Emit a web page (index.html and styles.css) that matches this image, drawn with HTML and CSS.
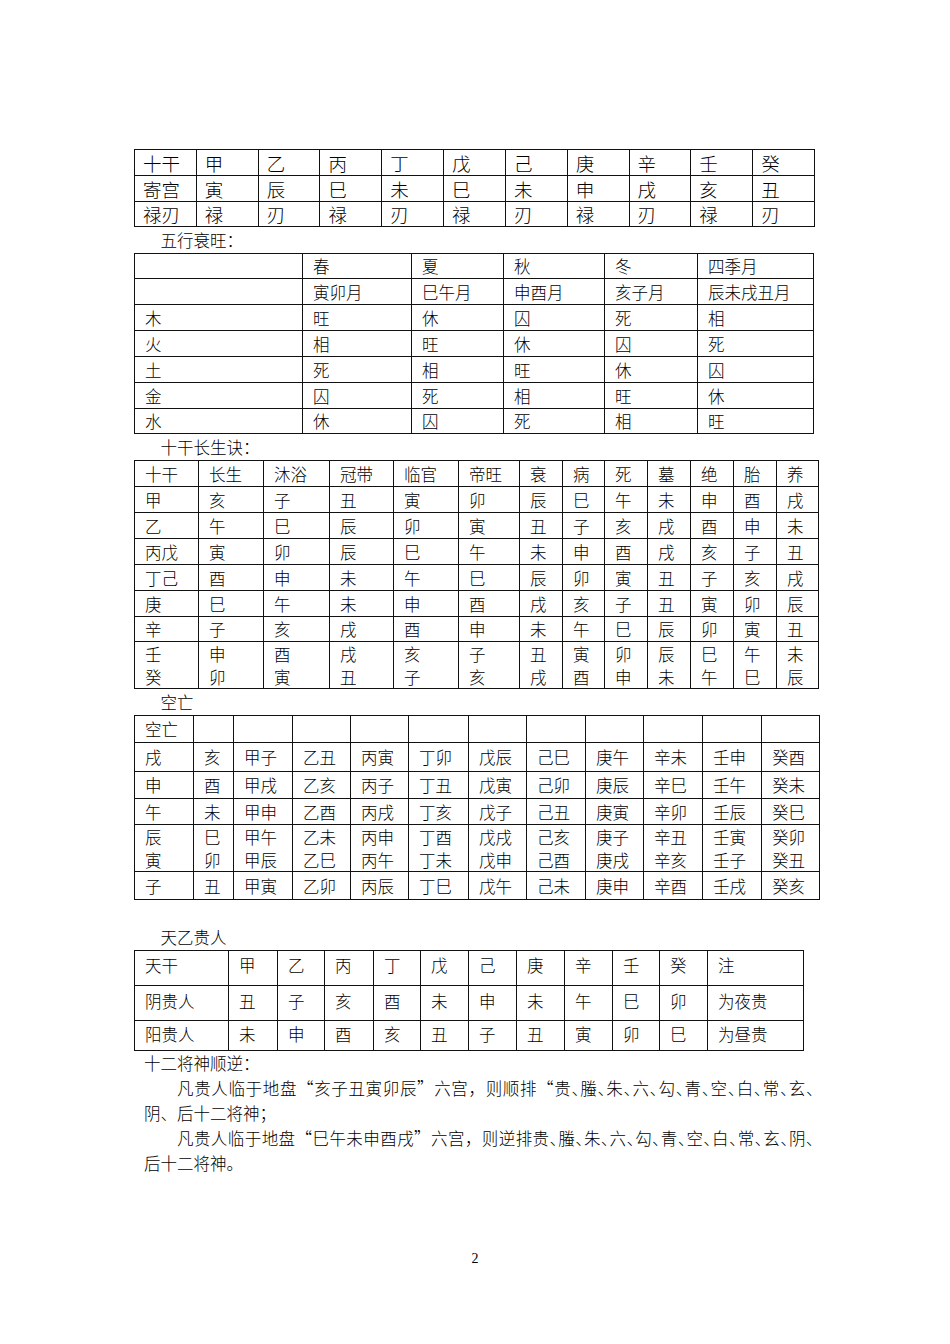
FILE: index.html
```html
<!DOCTYPE html>
<html lang="zh-CN">
<head>
<meta charset="utf-8">
<title>十干 寄宫 禄刃</title>
<link rel="stylesheet" href="styles.css">
</head>
<body>
<div class="page">
  <table class="t1">
    <tr><td>十干</td><td>甲</td><td>乙</td><td>丙</td><td>丁</td><td>戊</td><td>己</td><td>庚</td><td>辛</td><td>壬</td><td>癸</td></tr>
    <tr><td>寄宫</td><td>寅</td><td>辰</td><td>巳</td><td>未</td><td>巳</td><td>未</td><td>申</td><td>戌</td><td>亥</td><td>丑</td></tr>
    <tr class="r25"><td>禄刃</td><td>禄</td><td>刃</td><td>禄</td><td>刃</td><td>禄</td><td>刃</td><td>禄</td><td>刃</td><td>禄</td><td>刃</td></tr>
  </table>

  <div class="cap">五行衰旺：</div>
  <table class="t2">
    <colgroup><col class="w168"><col class="w109"><col class="w92"><col class="w101"><col class="w93"><col class="w116"></colgroup>
    <tr class="r25"><td></td><td>春</td><td>夏</td><td>秋</td><td>冬</td><td>四季月</td></tr>
    <tr><td></td><td>寅卯月</td><td>巳午月</td><td>申酉月</td><td>亥子月</td><td>辰未戌丑月</td></tr>
    <tr><td>木</td><td>旺</td><td>休</td><td>囚</td><td>死</td><td>相</td></tr>
    <tr><td>火</td><td>相</td><td>旺</td><td>休</td><td>囚</td><td>死</td></tr>
    <tr><td>土</td><td>死</td><td>相</td><td>旺</td><td>休</td><td>囚</td></tr>
    <tr><td>金</td><td>囚</td><td>死</td><td>相</td><td>旺</td><td>休</td></tr>
    <tr class="r25"><td>水</td><td>休</td><td>囚</td><td>死</td><td>相</td><td>旺</td></tr>
  </table>

  <div class="cap">十干长生诀：</div>
  <table class="t3">
    <colgroup><col class="w64"><col class="w65"><col class="w66"><col class="w64"><col class="w65"><col class="w61"><col class="w43"><col class="w42"><col class="w43"><col class="w43"><col class="w43"><col class="w43"><col class="w42"></colgroup>
    <tr><td>十干</td><td>长生</td><td>沐浴</td><td>冠带</td><td>临官</td><td>帝旺</td><td>衰</td><td>病</td><td>死</td><td>墓</td><td>绝</td><td>胎</td><td>养</td></tr>
    <tr><td>甲</td><td>亥</td><td>子</td><td>丑</td><td>寅</td><td>卯</td><td>辰</td><td>巳</td><td>午</td><td>未</td><td>申</td><td>酉</td><td>戌</td></tr>
    <tr><td>乙</td><td>午</td><td>巳</td><td>辰</td><td>卯</td><td>寅</td><td>丑</td><td>子</td><td>亥</td><td>戌</td><td>酉</td><td>申</td><td>未</td></tr>
    <tr><td>丙戊</td><td>寅</td><td>卯</td><td>辰</td><td>巳</td><td>午</td><td>未</td><td>申</td><td>酉</td><td>戌</td><td>亥</td><td>子</td><td>丑</td></tr>
    <tr><td>丁己</td><td>酉</td><td>申</td><td>未</td><td>午</td><td>巳</td><td>辰</td><td>卯</td><td>寅</td><td>丑</td><td>子</td><td>亥</td><td>戌</td></tr>
    <tr><td>庚</td><td>巳</td><td>午</td><td>未</td><td>申</td><td>酉</td><td>戌</td><td>亥</td><td>子</td><td>丑</td><td>寅</td><td>卯</td><td>辰</td></tr>
    <tr class="r25"><td>辛</td><td>子</td><td>亥</td><td>戌</td><td>酉</td><td>申</td><td>未</td><td>午</td><td>巳</td><td>辰</td><td>卯</td><td>寅</td><td>丑</td></tr>
    <tr class="open-b r24"><td>壬</td><td>申</td><td>酉</td><td>戌</td><td>亥</td><td>子</td><td>丑</td><td>寅</td><td>卯</td><td>辰</td><td>巳</td><td>午</td><td>未</td></tr>
    <tr class="open-t r24"><td>癸</td><td>卯</td><td>寅</td><td>丑</td><td>子</td><td>亥</td><td>戌</td><td>酉</td><td>申</td><td>未</td><td>午</td><td>巳</td><td>辰</td></tr>
  </table>

  <div class="cap">空亡</div>
  <table class="t4">
    <colgroup><col class="w59"><col class="w40"><col class="w59"><col class="w58"><col class="w58"><col class="w60"><col class="w58"><col class="w59"><col class="w58"><col class="w59"><col class="w59"><col class="w58"></colgroup>
    <tr class="r27"><td>空亡</td><td></td><td></td><td></td><td></td><td></td><td></td><td></td><td></td><td></td><td></td><td></td></tr>
    <tr class="r29"><td>戌</td><td>亥</td><td>甲子</td><td>乙丑</td><td>丙寅</td><td>丁卯</td><td>戊辰</td><td>己巳</td><td>庚午</td><td>辛未</td><td>壬申</td><td>癸酉</td></tr>
    <tr class="r27"><td>申</td><td>酉</td><td>甲戌</td><td>乙亥</td><td>丙子</td><td>丁丑</td><td>戊寅</td><td>己卯</td><td>庚辰</td><td>辛巳</td><td>壬午</td><td>癸未</td></tr>
    <tr><td>午</td><td>未</td><td>甲申</td><td>乙酉</td><td>丙戌</td><td>丁亥</td><td>戊子</td><td>己丑</td><td>庚寅</td><td>辛卯</td><td>壬辰</td><td>癸巳</td></tr>
    <tr class="open-b r24"><td>辰</td><td>巳</td><td>甲午</td><td>乙未</td><td>丙申</td><td>丁酉</td><td>戊戌</td><td>己亥</td><td>庚子</td><td>辛丑</td><td>壬寅</td><td>癸卯</td></tr>
    <tr class="open-t r24"><td>寅</td><td>卯</td><td>甲辰</td><td>乙巳</td><td>丙午</td><td>丁未</td><td>戊申</td><td>己酉</td><td>庚戌</td><td>辛亥</td><td>壬子</td><td>癸丑</td></tr>
    <tr class="r28"><td>子</td><td>丑</td><td>甲寅</td><td>乙卯</td><td>丙辰</td><td>丁巳</td><td>戊午</td><td>己未</td><td>庚申</td><td>辛酉</td><td>壬戌</td><td>癸亥</td></tr>
  </table>

  <div class="blank"></div>
  <div class="cap">天乙贵人</div>
  <table class="t5">
    <colgroup><col class="w94"><col class="w49"><col class="w47"><col class="w49"><col class="w47"><col class="w48"><col class="w48"><col class="w48"><col class="w48"><col class="w47"><col class="w48"><col class="w96"></colgroup>
    <tr class="r35"><td>天干</td><td>甲</td><td>乙</td><td>丙</td><td>丁</td><td>戊</td><td>己</td><td>庚</td><td>辛</td><td>壬</td><td>癸</td><td>注</td></tr>
    <tr class="r35 mid"><td>阴贵人</td><td>丑</td><td>子</td><td>亥</td><td>酉</td><td>未</td><td>申</td><td>未</td><td>午</td><td>巳</td><td>卯</td><td>为夜贵</td></tr>
    <tr class="r30"><td>阳贵人</td><td>未</td><td>申</td><td>酉</td><td>亥</td><td>丑</td><td>子</td><td>丑</td><td>寅</td><td>卯</td><td>巳</td><td>为昼贵</td></tr>
  </table>

  <div class="text">
    <p class="head">十二将神顺逆：</p>
    <p><span class="ln">凡贵人临于地盘“亥子丑寅卯辰”六宫，则顺排“贵<span class="h">、</span>螣<span class="h">、</span>朱<span class="h">、</span>六<span class="h">、</span>勾<span class="h">、</span>青<span class="h">、</span>空<span class="h">、</span>白<span class="h">、</span>常<span class="h">、</span>玄<span class="h">、</span></span>阴、后十二将神；</p>
    <p><span class="ln">凡贵人临于地盘“巳午未申酉戌”六宫，则逆排贵<span class="h">、</span>螣<span class="h">、</span>朱<span class="h">、</span>六<span class="h">、</span>勾<span class="h">、</span>青<span class="h">、</span>空<span class="h">、</span>白<span class="h">、</span>常<span class="h">、</span>玄<span class="h">、</span>阴<span class="h">、</span></span>后十二将神。</p>
  </div>
</div>
<div class="pnum">2</div>
</body>
</html>
```

FILE: styles.css
```css
html, body {
  margin: 0;
  padding: 0;
  background: #ffffff;
}

body {
  color: #000000;
  font-family: "Noto Sans CJK SC", "Noto Sans CJK TC", sans-serif;
  font-size: 16.5px;
  font-weight: 300;
}

.page {
  padding: 149px 0 0 134px;
}

table {
  border-collapse: collapse;
  table-layout: fixed;
}

/* cell height + padding + 1px shared border = row pitch */
td {
  border: 1px solid #111111;
  padding: 0 0 0 10px;
  height: 25px;
  line-height: 20px;
  vertical-align: middle;
  white-space: nowrap;
  overflow: hidden;
}

tr.r24 td { height: 23px; }
tr.r25 td { height: 24px; }
tr.r27 td { height: 26px; }
tr.r28 td { height: 27px; }
tr.r29 td { height: 28px; }
tr.r30 td { height: 26px; vertical-align: top; padding-top: 3px; }
tr.r35 td { height: 30px; vertical-align: top; padding-top: 4px; }
tr.r35.mid td { height: 29px; padding-top: 5px; }

tr.open-b td { border-bottom: none; }
tr.open-t td { border-top: none; }

.t1 {
  width: 681px;
  font-size: 18.5px;
}
.t1 td { padding-left: 8px; }

.t2 { width: 679px; }
.t3 { width: 684px; }
.t4 { width: 685px; }
.t5 { width: 669px; }

col.w40 { width: 40px; }
col.w42 { width: 42px; }
col.w43 { width: 43px; }
col.w47 { width: 47px; }
col.w48 { width: 48px; }
col.w49 { width: 49px; }
col.w58 { width: 58px; }
col.w59 { width: 59px; }
col.w60 { width: 60px; }
col.w61 { width: 61px; }
col.w64 { width: 64px; }
col.w65 { width: 65px; }
col.w66 { width: 66px; }
col.w92 { width: 92px; }
col.w93 { width: 93px; }
col.w94 { width: 94px; }
col.w96 { width: 96px; }
col.w101 { width: 101px; }
col.w109 { width: 109px; }
col.w116 { width: 116px; }
col.w168 { width: 168px; }

.cap {
  height: 26px;
  line-height: 26px;
  margin-left: 10px;
  text-indent: 1em;
}

.blank {
  height: 24px;
}

.text {
  margin-left: 10px;
  width: 670px;
  line-height: 25px;
  text-align: justify;
}

.text p {
  margin: 0;
  text-indent: 2em;
}

.text p.head {
  text-indent: 0;
}

.ln {
  display: block;
  text-align-last: justify;
}

.h {
  font-feature-settings: "halt" 1;
}

.pnum {
  margin-top: 73px;
  text-align: center;
  font-family: "Liberation Serif", serif;
  font-size: 14px;
  line-height: 20px;
}
```
